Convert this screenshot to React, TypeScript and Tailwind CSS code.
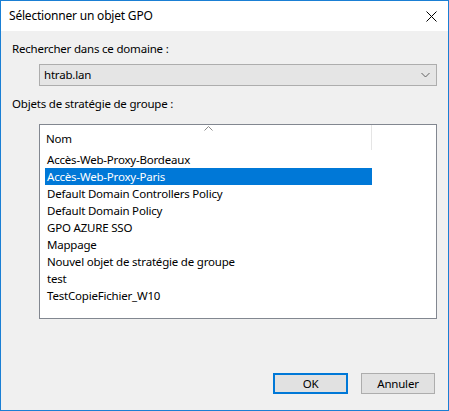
import React from "react";

const gpos = [
  "Accès-Web-Proxy-Bordeaux",
  "Accès-Web-Proxy-Paris",
  "Default Domain Controllers Policy",
  "Default Domain Policy",
  "GPO AZURE SSO",
  "Mappage",
  "Nouvel objet de stratégie de groupe",
  "test",
  "TestCopieFichier_W10",
];

const selected = 1;

export default function App() {
  return (
    <div
      className="w-[449px] h-[411px] border border-[#1a7fd4] bg-[#f0f0f0] flex flex-col text-[11.5px] text-black tracking-[-0.2px]"
      style={{ fontFamily: '"Noto Sans", "Open Sans", sans-serif' }}
    >
      {/* title bar */}
      <div className="h-[30px] bg-white flex items-center justify-between pl-[8px] pr-[10px] shrink-0">
        <span className="text-[12px] leading-none">Sélectionner un objet GPO</span>
        <svg width="11" height="11" viewBox="0 0 11 11" className="mr-[1px]">
          <path d="M0.5 0.5 L10.5 10.5 M10.5 0.5 L0.5 10.5" stroke="#000" strokeWidth="1" />
        </svg>
      </div>

      <div className="flex flex-col pl-[11px] pr-[11px] pt-[10px]">
        <div className="leading-[16px]">Rechercher dans ce domaine :</div>

        {/* domain combobox */}
        <div className="ml-[27px] mt-[7px] h-[22px] border border-[#adadad] bg-[#e5e5e5] flex items-center justify-between pl-[4px] pr-[6px]">
          <span>htrab.lan</span>
          <svg width="9" height="6" viewBox="0 0 9 6">
            <path d="M0.5 1 L4.5 5 L8.5 1" stroke="#606060" strokeWidth="1" fill="none" />
          </svg>
        </div>

        <div className="leading-[16px] mt-[10px]">Objets de stratégie de groupe :</div>

        {/* group policy objects list */}
        <div className="ml-[27px] mt-[12px] h-[195px] border border-[#828790] bg-white flex flex-col">
          <div className="relative h-[25px] shrink-0 flex">
            <div className="w-[332px] border-r border-[#e5e5e5] flex items-center pl-[6px] pt-[3px]">
              Nom
            </div>
            <svg
              width="9"
              height="5"
              viewBox="0 0 9 5"
              className="absolute left-[164px] top-[1px]"
            >
              <path d="M0.5 4.5 L4.5 0.5 L8.5 4.5" stroke="#8a8a8a" strokeWidth="1" fill="none" />
            </svg>
          </div>
          <div className="flex flex-col pl-[5px] pt-[1px]">
            {gpos.map((name, i) => (
              <div
                key={name}
                className={
                  i === selected
                    ? "h-[17px] w-[327px] flex items-center pl-[2px] bg-[#0078d7] text-white"
                    : "h-[17px] w-[327px] flex items-center pl-[2px]"
                }
              >
                {name}
              </div>
            ))}
          </div>
        </div>

        {/* dialog buttons */}
        <div className="flex justify-end gap-[13px] mt-[54px] pr-[2px]">
          <button className="w-[75px] h-[21px] border-2 border-[#0078d7] bg-[#e1e1e1] flex items-center justify-center">
            OK
          </button>
          <button className="w-[74px] h-[21px] border border-[#adadad] bg-[#e1e1e1] flex items-center justify-center">
            Annuler
          </button>
        </div>
      </div>
    </div>
  );
}
